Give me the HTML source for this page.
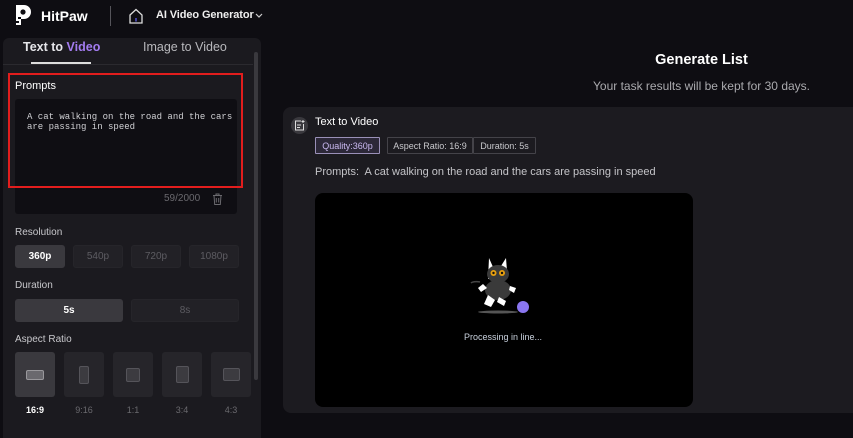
<!DOCTYPE html>
<html><head><meta charset="utf-8"><style>
*{margin:0;padding:0;box-sizing:border-box}
body{width:853px;height:427px;overflow:hidden;background:#0e0d12;font-family:"Liberation Sans",sans-serif;color:#fff;position:relative}
.a{position:absolute}
.btn{position:absolute;height:23px;border-radius:3px;background:#222126;border:1px solid #26252a;color:#5d5c62;font-size:10px;display:flex;align-items:center;justify-content:center}
.btn.on{background:#3a393e;color:#fff;font-weight:bold;border-color:#3a393e}
.lbl{position:absolute;left:15px;font-size:10px;color:#c8c8cc}
.tile{position:absolute;top:352px;width:40px;height:45px;border-radius:3px;background:#26252a;display:flex;align-items:center;justify-content:center}
.tile.on{background:#3a393e}
.tile i{display:block;background:#3c3b40;border:1px solid #55545a;border-radius:2px}
.tl{position:absolute;top:405px;width:40px;text-align:center;font-size:9px;color:#6a696e}
.tag{position:absolute;top:137px;height:17px;border:1px solid #444349;font-size:9px;color:#c8c8cc;display:flex;align-items:center;justify-content:center;border-radius:1px}
</style></head><body>
<!-- header -->
<svg class="a" style="left:13px;top:4px" width="20" height="22" viewBox="0 0 20 22"><path d="M3 1h8a7 7 0 0 1 0 14h-3v6H3z" fill="#fff"/><circle cx="10" cy="8" r="2.6" fill="#0e0d12"/><rect x="5" y="13" width="3" height="2" fill="#0e0d12"/><rect x="3" y="17" width="3" height="2" fill="#0e0d12"/></svg>
<div class="a" style="left:41px;top:8px;font-size:14px;font-weight:bold">HitPaw</div>
<div class="a" style="left:110px;top:6px;width:1px;height:20px;background:#55545a"></div>
<svg class="a" style="left:128px;top:8px" width="16" height="16" viewBox="0 0 16 16"><path d="M2 7L8 1.5 14 7V15H2z" fill="none" stroke="#ddd" stroke-width="1.3"/><rect x="7.3" y="10" width="1.4" height="3.5" fill="#5a5ae0"/></svg>
<div class="a" style="left:156px;top:9px;font-size:11px;color:#eee;font-weight:bold;letter-spacing:-0.1px">AI Video Generator</div>
<svg class="a" style="left:255px;top:13px" width="8" height="6"><path d="M1 1l3 3 3-3" fill="none" stroke="#ccc" stroke-width="1.2"/></svg>
<!-- left panel -->
<div class="a" style="left:3px;top:38px;width:258px;height:400px;background:#1b1a1f;border-radius:6px 6px 0 0"></div>
<div class="a" style="left:23px;top:40px;font-size:12.5px;font-weight:bold;color:#e6e6ea">Text to <span style="color:#a37cf0">Video</span></div>
<div class="a" style="left:143px;top:40px;font-size:12.5px;color:#b8b8bc">Image to Video</div>
<div class="a" style="left:3px;top:64px;width:250px;height:1px;background:#2b2a2f"></div>
<div class="a" style="left:31px;top:62px;width:60px;height:2px;background:#ddd"></div>
<div class="a" style="left:254px;top:52px;width:4px;height:328px;background:#3a393e;border-radius:2px"></div>
<div class="a" style="left:15px;top:99px;width:222px;height:115px;background:#0f0e13;border-radius:3px"></div>
<div class="a" style="left:8px;top:73px;width:235px;height:115px;border:2px solid #e21d1d"></div>
<div class="a" style="left:15px;top:80px;font-size:11px;color:#fff">Prompts</div>
<div class="a" style="left:27px;top:112px;font-family:'Liberation Mono',monospace;font-size:9px;line-height:10px;color:#d0d0d4">A cat walking on the road and the cars<br>are passing in speed</div>
<div class="a" style="left:164px;top:193px;font-size:10px;color:#6a696e">59/2000</div>
<svg class="a" style="left:212px;top:193px" width="11" height="12" viewBox="0 0 11 12"><path d="M1 2.5h9M4 2.5V1h3v1.5M2 2.5l.7 9h5.6l.7-9M4.3 5v4.5M6.7 5v4.5" fill="none" stroke="#6a696e" stroke-width="1"/></svg>
<div class="lbl" style="top:227px">Resolution</div>
<div class="btn on" style="left:15px;top:245px;width:50px">360p</div>
<div class="btn" style="left:73px;top:245px;width:50px">540p</div>
<div class="btn" style="left:131px;top:245px;width:50px">720p</div>
<div class="btn" style="left:189px;top:245px;width:50px">1080p</div>
<div class="lbl" style="top:280px">Duration</div>
<div class="btn on" style="left:15px;top:299px;width:108px">5s</div>
<div class="btn" style="left:131px;top:299px;width:108px">8s</div>
<div class="lbl" style="top:334px">Aspect Ratio</div>
<div class="tile on" style="left:15px"><i style="width:18px;height:10px;background:#6a696e;border-color:#99989c"></i></div>
<div class="tile" style="left:64px"><i style="width:10px;height:18px"></i></div>
<div class="tile" style="left:113px"><i style="width:14px;height:14px"></i></div>
<div class="tile" style="left:162px"><i style="width:13px;height:17px"></i></div>
<div class="tile" style="left:211px"><i style="width:17px;height:13px"></i></div>
<div class="tl" style="left:15px;color:#fff;font-weight:bold">16:9</div>
<div class="tl" style="left:64px">9:16</div>
<div class="tl" style="left:113px">1:1</div>
<div class="tl" style="left:162px">3:4</div>
<div class="tl" style="left:211px">4:3</div>
<!-- right -->
<div class="a" style="left:560px;top:52px;width:283px;text-align:center;font-size:14.5px;font-weight:bold">Generate List</div>
<div class="a" style="left:560px;top:79px;width:283px;text-align:center;font-size:12px;color:#aaaaae">Your task results will be kept for 30 days.</div>
<div class="a" style="left:283px;top:107px;width:580px;height:306px;background:#1c1b20;border-radius:8px"></div>
<div class="a" style="left:291px;top:117px;width:17px;height:17px;border-radius:50%;background:#3a393e"></div>
<svg class="a" style="left:294px;top:120px" width="11" height="11" viewBox="0 0 11 11"><path d="M7 1H1.5v9h8V4M3 5h4M3 7.5h3" fill="none" stroke="#ddd" stroke-width="1"/><path d="M9 0v3M7.5 1.5h3" stroke="#ddd" stroke-width="1"/></svg>
<div class="a" style="left:315px;top:116px;font-size:11px;color:#fff">Text to Video</div>
<div class="tag" style="left:315px;width:65px;border-color:#9a90b8;background:#2c2838;color:#c9b8f0">Quality:360p</div>
<div class="tag" style="left:387px;width:86px">Aspect Ratio: 16:9</div>
<div class="tag" style="left:473px;width:63px">Duration: 5s</div>
<div class="a" style="left:315px;top:166px;font-size:11px;color:#c4c4c8">Prompts:&nbsp; A cat walking on the road and the cars are passing in speed</div>
<div class="a" style="left:315px;top:193px;width:378px;height:214px;background:#000;border-radius:8px"></div>
<svg class="a" style="left:470px;top:255px" width="65" height="65" viewBox="0 0 65 65">
<ellipse cx="28" cy="57" rx="20" ry="1.5" fill="#555"/>
<path d="M10 27c-4-1-8 0-9 1" stroke="#444" stroke-width="1.5" fill="none"/>
<path d="M19 3l4 9 8-1 5-8 1 13-6 8H18z" fill="#fff"/>
<ellipse cx="28" cy="19" rx="11" ry="9" fill="#3a3a3a"/>
<circle cx="23.5" cy="18" r="3" fill="#e8a010"/><circle cx="32" cy="18" r="3" fill="#e8a010"/>
<circle cx="23.5" cy="18" r="1.2" fill="#111"/><circle cx="32" cy="18" r="1.2" fill="#111"/>
<ellipse cx="28" cy="35" rx="13" ry="10" fill="#3a3a3a"/>
<path d="M13 29l-5 4 3 4 6-4z" fill="#fff"/><path d="M40 31l6 2-2 5-5-3z" fill="#fff"/>
<path d="M18 40l-4 9 7 3 4-7z" fill="#fff"/><path d="M29 42l7 4-2 5-7-4z" fill="#fff"/>
<circle cx="53" cy="52" r="6" fill="#8a76f0"/>
</svg>
<div class="a" style="left:440px;top:332px;width:126px;text-align:center;font-size:9px;color:#c8d0dc">Processing in line...</div>
</body></html>
